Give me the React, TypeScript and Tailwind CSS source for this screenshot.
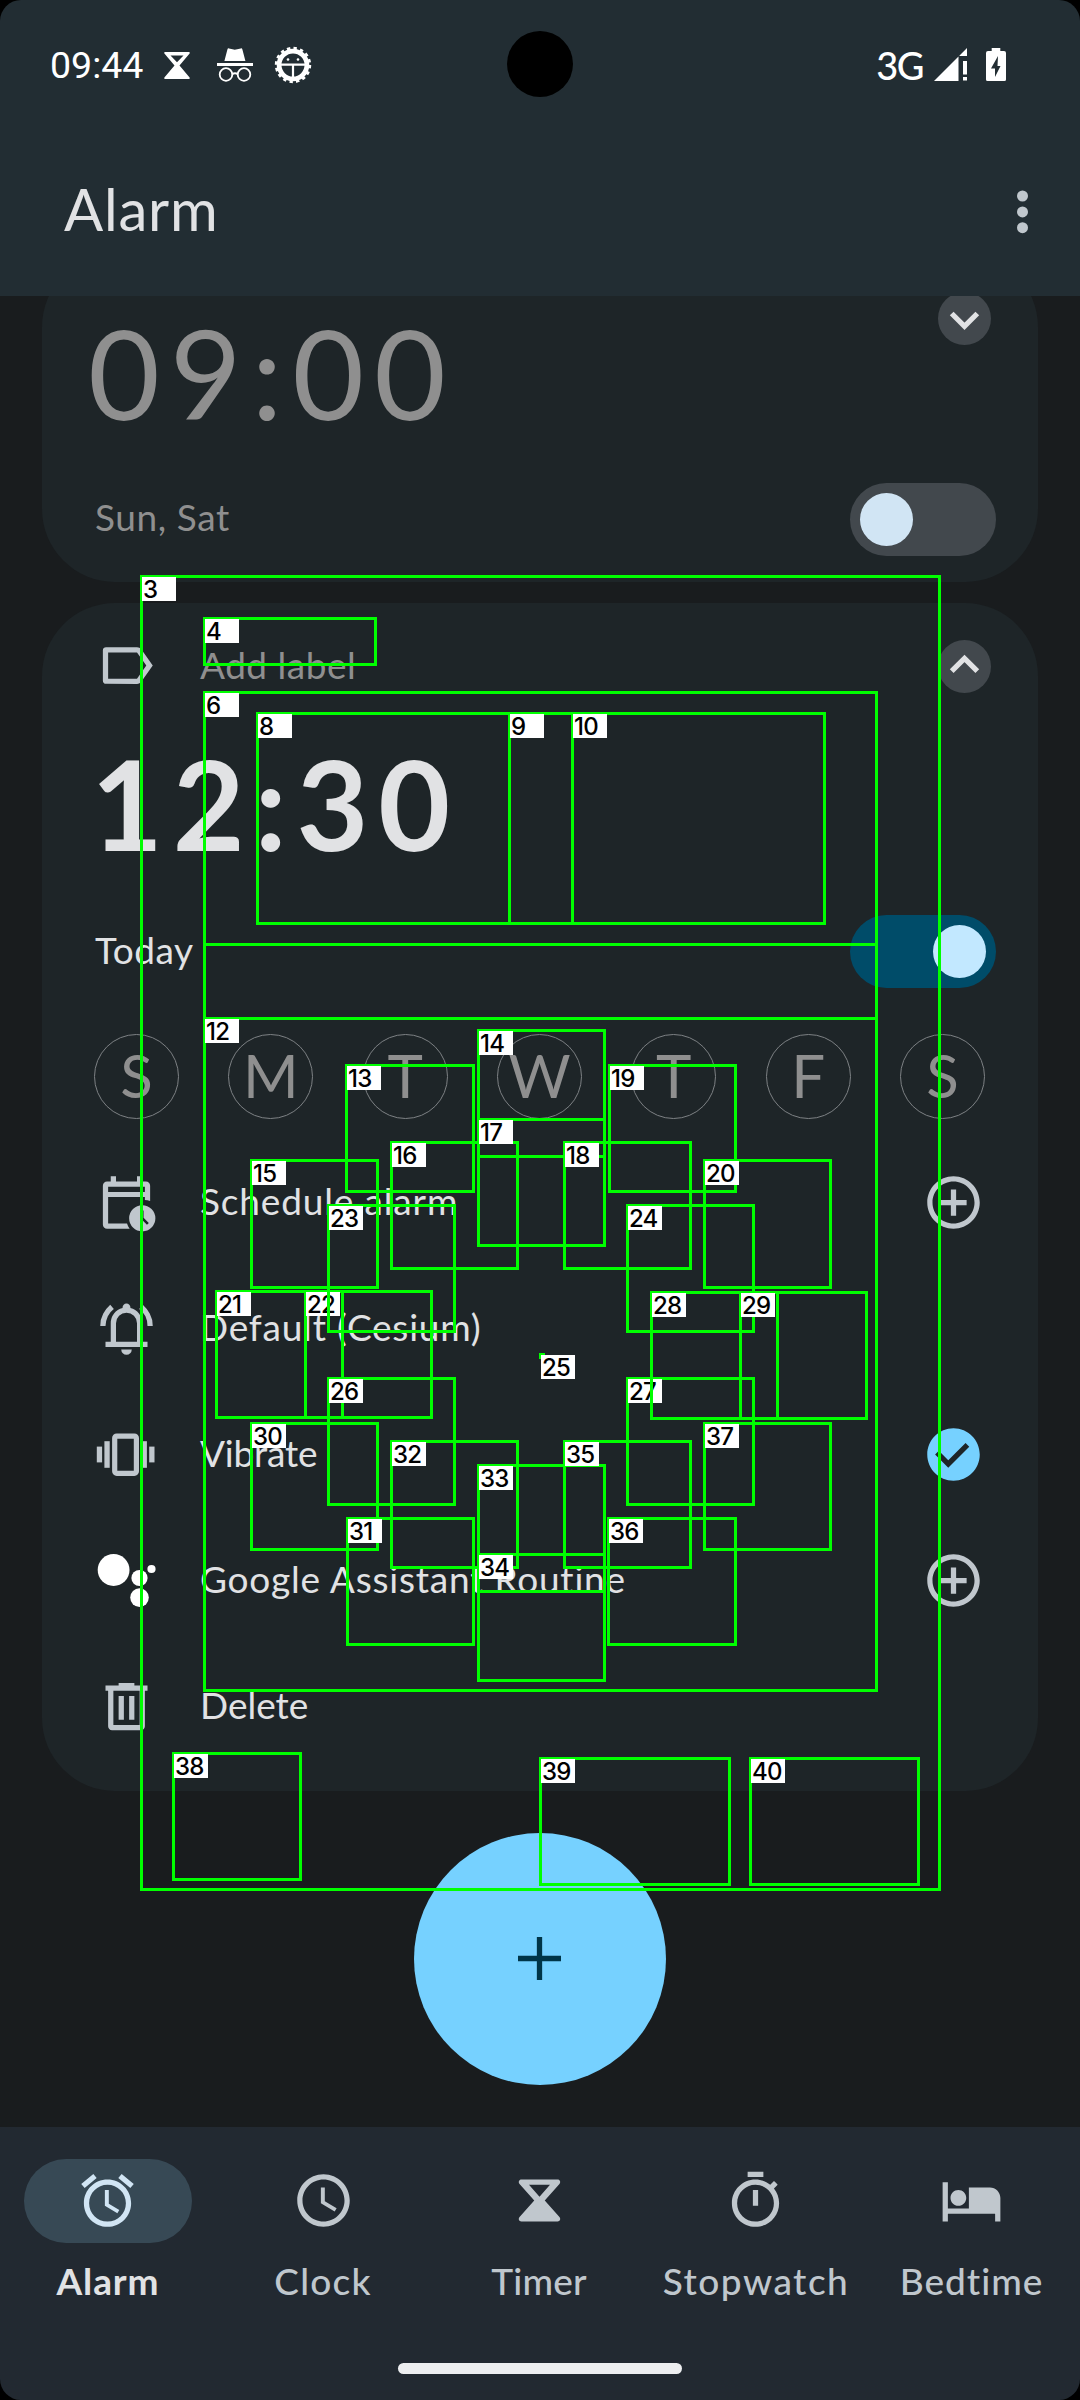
import type { ReactNode } from 'react';

const ICON = 'size-[63px] shrink-0';

function Icon({ d, className = '' }: { d: string; className?: string }) {
  return (
    <svg viewBox="0 0 24 24" className={`${ICON} ${className}`} fill="currentColor">
      <path d={d} />
    </svg>
  );
}

const paths = {
  label:
    'M17.63 5.84C17.27 5.33 16.67 5 16 5L4.2 5.01C3.5 5.01 3 5.4 3 6.2v11.6c0 .8.5 1.19 1.2 1.19L16 19c.67 0 1.27-.33 1.63-.84L22 12l-4.37-6.16zM16 17H5V7h11l3.55 5L16 17z',
  bell:
    'M4 19v-2h2v-7q0-2.075 1.25-3.687T10.5 4.2V4q0-.625.438-1.062T12 2.5t1.063.438T13.5 4v.2q2 .5 3.25 2.113T18 10v7h2v2H4zm8 3q-.825 0-1.412-.587T10 20h4q0 .825-.587 1.413T12 22zm-4-5h8v-7q0-1.65-1.175-2.825T12 6 9.175 7.175 8 10v7zM2 11q0-2.5 1.113-4.587T5.8 2.95l1.375 1.6Q5.675 5.65 4.888 7.325T4 11H2zm18 0q0-2-.788-3.675T16.826 4.55l1.375-1.6q1.575 1.375 2.688 3.463T22 11h-2z',
  trash:
    'M9 3v1H4v2h1v13.5c0 .9.6 1.5 1.5 1.5h11c.9 0 1.5-.6 1.5-1.5V6h1V4h-5V3H9M7 6h10v13H7V6m2 2v9h2V8H9m4 0v9h2V8h-2z',
  addCircle:
    'M13 7h-2v4H7v2h4v4h2v-4h4v-2h-4V7zm-1-5C6.48 2 2 6.48 2 12s4.48 10 10 10 10-4.48 10-10S17.52 2 12 2zm0 18c-4.41 0-8-3.59-8-8s3.59-8 8-8 8 3.59 8 8-3.59 8-8 8z',
  checkCircle:
    'M12 2C6.48 2 2 6.48 2 12s4.48 10 10 10 10-4.48 10-10S17.52 2 12 2zm-2 15l-5-5 1.41-1.41L10 14.17l6.59-6.59L18 9l-8 8z',
  alarm:
    'M22 5.72l-4.6-3.86-1.29 1.53 4.6 3.86L22 5.72zM7.88 3.39L6.6 1.86 2 5.71l1.29 1.53 4.59-3.85zM12.5 8H11v6l4.75 2.85.75-1.23-4-2.37V8zM12 4c-4.97 0-9 4.03-9 9s4.02 9 9 9c4.97 0 9-4.03 9-9s-4.03-9-9-9zm0 16c-3.87 0-7-3.13-7-7s3.13-7 7-7 7 3.13 7 7-3.13 7-7 7z',
  clock:
    'M11.99 2C6.47 2 2 6.48 2 12s4.47 10 9.99 10C17.52 22 22 17.52 22 12S17.52 2 11.99 2zM12 20c-4.42 0-8-3.58-8-8s3.58-8 8-8 8 3.58 8 8-3.58 8-8 8zm.5-13H11v6l5.25 3.15.75-1.23-4.5-2.67z',
  timer:
    'M5.1 4h13.8c.9 0 1.3 1 .7 1.7L14 12l5.6 6.3c.6.7.2 1.7-.7 1.7H5.1c-.9 0-1.3-1-.7-1.7L10 12 4.4 5.7C3.8 5 4.2 4 5.1 4zM8 6l4 4.6L16 6H8z',
  stopwatch:
    'M15 1H9v2h6V1zm-4 13h2V8h-2v6zm8.03-6.61l1.42-1.42c-.43-.51-.9-.99-1.41-1.41l-1.42 1.42C16.07 4.74 14.12 4 12 4c-4.97 0-9 4.03-9 9s4.02 9 9 9 9-4.03 9-9c0-2.12-.74-4.07-1.97-5.61zM12 20c-3.87 0-7-3.13-7-7s3.13-7 7-7 7 3.13 7 7-3.13 7-7 7z',
  bed:
    'M7 14c1.66 0 3-1.34 3-3S8.66 8 7 8s-3 1.34-3 3 1.34 3 3 3zm12-7h-8v8H3V5H1v15h2v-3h18v3h2v-9c0-2.21-1.79-4-4-4z',
};

function ScheduleIcon() {
  return (
    <svg viewBox="0 0 24 24" className={ICON} fill="currentColor">
      <path d="M4.6 4H6V2h2v2h8V2h2v2h1.4c.9 0 1.6.7 1.6 1.6v5.8c-.6-.25-1.3-.4-2-.4v-1.1H5V20h7.2c.2.75.55 1.4 1 2H4.6c-.9 0-1.6-.7-1.6-1.6V5.6C3 4.7 3.7 4 4.6 4zM5 6v2h14V6H5z" />
      <path
        fillRule="evenodd"
        d="M18 13a5 5 0 1 1 0 10 5 5 0 0 1 0-10zm-.4 2v3.3l2.2 2.2.7-.7-2-2V15h-.9z"
      />
    </svg>
  );
}

function VibrateIcon() {
  return (
    <svg viewBox="0 0 63 63" className={ICON} fill="currentColor">
      <rect x="1.8" y="23.6" width="5.3" height="15.8" />
      <rect x="9.4" y="18.2" width="5.3" height="26.6" />
      <rect x="19.7" y="13.1" width="21.7" height="37.2" rx="2" fill="none" stroke="currentColor" strokeWidth="5.2" />
      <rect x="46.6" y="18.2" width="5.3" height="26.6" />
      <rect x="54.2" y="23.6" width="5.3" height="15.8" />
    </svg>
  );
}

function AssistantIcon() {
  return (
    <svg viewBox="0 0 63 63" className={`${ICON} text-white`} fill="currentColor">
      <circle cx="18.6" cy="21" r="15.9" />
      <circle cx="44.5" cy="29" r="8.1" />
      <circle cx="44.5" cy="48.6" r="9.3" />
      <circle cx="56.5" cy="20" r="4.1" />
    </svg>
  );
}

function StatusBar() {
  return (
    <div className="flex h-[128px] items-center justify-between pr-[74px] pl-[50px] pt-[1px] text-white">
      <div className="flex items-center">
        <span className="w-[114px] pt-[3px] font-[Roboto] text-[37.5px] leading-none">09:44</span>
        <svg viewBox="0 0 26 27" className="mt-px h-[27px] w-[26px]" fill="currentColor">
          <path
            fillRule="evenodd"
            d="M1 0h24c.8 0 1 .8.6 1.4L15.5 13.5 25.6 25.6c.4.6.2 1.4-.6 1.4H1c-.8 0-1-.8-.6-1.4L10.5 13.5.4 1.4C0 .8.2 0 1 0zM6.5 3.6 13 10.2l6.5-6.6z"
          />
        </svg>
        <svg viewBox="0 0 36 34" className="ml-[27px] h-[34px] w-[36px]" fill="none">
          <path d="M12 .4 17.8 1.8 23.8.4c.8-.2 1.4.2 1.6 1l3 11.6H7.4L10.4 1.4c.2-.8.8-1.2 1.6-1z" fill="currentColor" />
          <rect y="15" width="36" height="3" fill="currentColor" />
          <circle cx="9" cy="26.5" r="6.3" stroke="currentColor" strokeWidth="1.8" />
          <circle cx="27" cy="26.5" r="6.3" stroke="currentColor" strokeWidth="1.8" />
          <path d="M15 26.5q3-2.4 6 0" stroke="currentColor" strokeWidth="1.8" />
        </svg>
        <svg viewBox="0 0 38 38" className="ml-[21px] size-[38px]" fill="none" stroke="currentColor">
          <circle cx="19" cy="19" r="13.9" strokeWidth="4.8" />
          <circle cx="19" cy="19" r="16.6" strokeWidth="3.2" strokeDasharray="3.3 3.219" />
          <path d="M6 18.7h26M19 18.7V32" strokeWidth="2.2" />
          <circle cx="14" cy="13.5" r="1.3" fill="currentColor" stroke="none" />
          <circle cx="24" cy="13.5" r="1.3" fill="currentColor" stroke="none" />
        </svg>
      </div>
      <div className="flex items-center">
        <span className="mr-[11px] font-[Lato] text-[38px] leading-none font-medium tracking-[-1.5px]">3G</span>
        <svg viewBox="0 0 33 33" className="h-[33px] w-[33px]" fill="currentColor">
          <path d="M0 33 24.5 8.5V33zM25.5 7.5 33 0v8h-7.500zM29 13h4v13.500h-4zM29 29h4v3.500h-4z" />
        </svg>
        <svg viewBox="0 0 20 33" className="ml-[19px] h-[33px] w-[20px]">
          <path d="M5.7 0h8.6v3H18a2 2 0 0 1 2 2v26.5a1.5 1.5 0 0 1-1.5 1.5h-17A1.5 1.5 0 0 1 0 31.5V5a2 2 0 0 1 2-2h3.7z" fill="currentColor" />
          <path d="M12 8 5 20.5h4V29l5.5-11H11.5z" fill="#222d33" />
        </svg>
      </div>
    </div>
  );
}

function Chevron({ up = false }: { up?: boolean }) {
  return (
    <div className="mr-[5px] flex size-[53px] items-center justify-center rounded-full bg-[#42484d]">
      <svg viewBox="-26.5 -26.5 53 53" className="size-[53px]" fill="none" stroke="#e1e2e4" strokeWidth="5.3">
        <path d={up ? 'M-12.8 4.7 0-8.1 12.8 4.7' : 'M-12.8-5 0 7.8 12.8-5'} />
      </svg>
    </div>
  );
}

function Toggle({ on = false }: { on?: boolean }) {
  return on ? (
    <div className="flex h-[73px] w-[146px] items-center justify-end rounded-full bg-[#004c69] p-[10px]">
      <div className="size-[53px] rounded-full bg-[#c2e8ff]" />
    </div>
  ) : (
    <div className="flex h-[73px] w-[146px] items-center rounded-full bg-[#42484d] p-[10px]">
      <div className="size-[53px] rounded-full bg-[#d1e5f4]" />
    </div>
  );
}

function Row({ icon, label, spacing, action }: { icon: ReactNode; label: string; spacing: string; action?: ReactNode }) {
  return (
    <div className="flex h-[126px] items-center gap-[42px] pr-[11px] text-[#c0c7cd]">
      {icon}
      <span className={`grow pb-[3px] text-[37px] leading-none whitespace-nowrap text-[#e1e2e4] ${spacing}`}>{label}</span>
      {action}
    </div>
  );
}

const days = ['S', 'M', 'T', 'W', 'T', 'F', 'S'];

const tabs = [
  { label: 'Alarm', icon: paths.alarm, text: 'tracking-[0.9px]', active: true },
  { label: 'Clock', icon: paths.clock, text: 'tracking-[1.2px] pr-0.5' },
  { label: 'Timer', icon: paths.timer, text: 'tracking-[0.2px] pr-0.5' },
  { label: 'Stopwatch', icon: paths.stopwatch, text: 'tracking-[1.5px]' },
  { label: 'Bedtime', icon: paths.bed, text: 'tracking-[1px] pr-px' },
];

/* Annotated regions: label, left, top, right, bottom (centre of the outline). */
const regions: [string, number, number, number, number][] = [
  ['3', 141, 576, 939, 1889],
  ['4', 204, 618, 375, 664],
  ['6', 204, 692, 876, 944],
  ['8', 257, 713, 509, 923],
  ['9', 509, 713, 572, 923],
  ['10', 572, 713, 824, 923],
  ['', 204, 944, 876, 1018],
  ['12', 204, 1018, 876, 1690],
  ['13', 346, 1065, 473, 1191],
  ['14', 478, 1030, 604, 1156],
  ['15', 251, 1160, 377, 1287],
  ['16', 391, 1142, 517, 1268],
  ['17', 478, 1119, 604, 1245],
  ['18', 564, 1142, 690, 1268],
  ['19', 609, 1065, 735, 1191],
  ['20', 704, 1160, 830, 1287],
  ['21', 216, 1291, 342, 1417],
  ['22', 305, 1291, 431, 1417],
  ['23', 328, 1205, 454, 1331],
  ['24', 627, 1205, 753, 1331],
  ['25', 540, 1354, 541, 1354],
  ['26', 328, 1378, 454, 1504],
  ['27', 627, 1378, 753, 1504],
  ['28', 651, 1292, 777, 1418],
  ['29', 740, 1292, 866, 1418],
  ['30', 251, 1423, 377, 1549],
  ['31', 347, 1518, 473, 1644],
  ['32', 391, 1441, 517, 1567],
  ['33', 478, 1465, 604, 1591],
  ['34', 478, 1554, 604, 1680],
  ['35', 564, 1441, 690, 1567],
  ['36', 608, 1518, 735, 1644],
  ['37', 704, 1423, 830, 1549],
  ['38', 173, 1753, 300, 1879],
  ['39', 540, 1758, 729, 1884],
  ['40', 750, 1758, 918, 1884],
];

function Regions() {
  return (
    <div className="pointer-events-none absolute inset-0">
      {regions.map(([label, l, t, r, b], i) => (
        <div
          key={i}
          className="absolute border-[3px] border-[#00ff00]"
          style={{ left: l - 1, top: t - 1, width: r - l + 3, height: b - t + 3 }}
        >
          {label && (
            <span className="absolute -top-px -left-px flex h-6 w-[34px] items-center bg-white pt-px pl-px font-[Inter] text-[24px] leading-none font-medium tracking-[-0.8px] text-black">
              {label}
            </span>
          )}
        </div>
      ))}
    </div>
  );
}

export default function App() {
  return (
    <div className="relative flex h-[2400px] w-[1080px] flex-col overflow-hidden bg-black font-[Lato,sans-serif] text-[#e1e2e4]">
      <header className="h-[296px] shrink-0 rounded-t-[21px] bg-[#222d33]">
        <StatusBar />
        <div className="flex h-[168px] items-center justify-between pr-[49px] pl-[64px]">
          <h1 className="pb-[6px] text-[58px] leading-none tracking-[0.8px]">Alarm</h1>
          <svg viewBox="0 0 16 48" className="h-[48px] w-[16px]" fill="#c0c7cd">
            <circle cx="7.5" cy="8" r="5.5" />
            <circle cx="7.5" cy="23.9" r="5.5" />
            <circle cx="7.5" cy="39.7" r="5.5" />
          </svg>
        </div>
      </header>

      <main className="relative h-[1831px] shrink-0 overflow-hidden bg-[#191c1e] px-[42px]">
        <section className="-mt-[42px] h-[328px] rounded-[73px] bg-[#1e2528] pt-[38px] pr-[42px] pl-[53px]">
          <div className="flex h-[160px] items-start justify-between">
            <span className="-ml-[7px] text-[124px] leading-[160px] tracking-[9.8px] text-[#8f8f8f]">09:00</span>
            <Chevron />
          </div>
          <div className="flex h-[130px] items-center justify-between pt-1">
            <span className="pb-[5px] text-[37px] leading-none tracking-[0.6px] text-[#8f8f8f]">Sun, Sat</span>
            <Toggle />
          </div>
        </section>

        <section className="mt-[21px] h-[1188px] rounded-[73px] bg-[#1e2528] pr-[42px] pl-[53px]">
          <div className="flex h-[126px] items-center gap-[42px] text-[#c0c7cd]">
            <Icon d={paths.label} className="-translate-y-px" />
            <span className="grow pb-1 text-[37px] leading-none tracking-[0.5px] text-[#8f8f8f]">Add label</span>
            <Chevron up />
          </div>
          <div className="flex h-[160px] items-center pb-3">
            <span className="-ml-[4px] text-[124px] leading-none font-bold tracking-[9.9px]">12:30</span>
          </div>
          <div className="flex h-[125px] items-center justify-between">
            <span className="pb-[5px] text-[37px] leading-none tracking-[0.5px]">Today</span>
            <Toggle on />
          </div>
          <div className="-ml-px flex h-[125px] items-center justify-between pr-[11px]">
            {days.map((d, i) => (
              <div
                key={i}
                className="flex size-[85px] items-center justify-center rounded-full border border-[#7d8184] pb-[3px] text-[60px] leading-none text-[#8f8f8f]"
              >
                {d}
              </div>
            ))}
          </div>
          <Row icon={<ScheduleIcon />} label="Schedule alarm" spacing="tracking-[0.85px]" action={<Icon d={paths.addCircle} />} />
          <Row icon={<Icon d={paths.bell} />} label="Default (Cesium)" spacing="tracking-[0.8px]" />
          <Row
            icon={<VibrateIcon />}
            label="Vibrate"
            spacing="tracking-[-0.2px]"
            action={<Icon d={paths.checkCircle} className="text-[#76d1ff]" />}
          />
          <Row icon={<AssistantIcon />} label="Google Assistant Routine" spacing="tracking-[0.78px]" action={<Icon d={paths.addCircle} />} />
          <Row icon={<Icon d={paths.trash} />} label="Delete" spacing="tracking-[0px]" />
        </section>

        <button className="absolute bottom-[42px] left-[414px] flex size-[252px] items-center justify-center rounded-full bg-[#76d1ff]">
          <svg viewBox="0 0 43 43" className="size-[43px] -translate-x-px -translate-y-px" stroke="#003548" strokeWidth="5.3">
            <path d="M21.5 0v43M0 21.5h43" />
          </svg>
        </button>
      </main>

      <nav className="flex h-[273px] shrink-0 flex-col rounded-b-[21px] bg-[#222931]">
        <div className="grid grid-cols-5 pt-8">
          {tabs.map((t) => (
            <div
              key={t.label}
              className={`flex flex-col items-center gap-[16px] ${t.active ? 'font-bold text-[#e1e2e4]' : 'font-medium text-[#c0c7cd]'}`}
            >
              <div
                className={`flex h-[84px] w-[168px] items-center justify-center rounded-full ${
                  t.active ? 'bg-[#374955] text-[#d1e5f4]' : ''
                }`}
              >
                <Icon d={t.icon} className="-translate-x-px -translate-y-px" />
              </div>
              <span className={`text-[37px] leading-[44px] ${t.text}`}>{t.label}</span>
            </div>
          ))}
        </div>
        <div className="mx-auto mt-auto mb-[26px] h-[11px] w-[284px] rounded-full bg-[#edeef0]" />
      </nav>

      <div className="absolute top-[31px] left-[507px] size-[66px] rounded-full bg-black" />
      <Regions />
    </div>
  );
}
